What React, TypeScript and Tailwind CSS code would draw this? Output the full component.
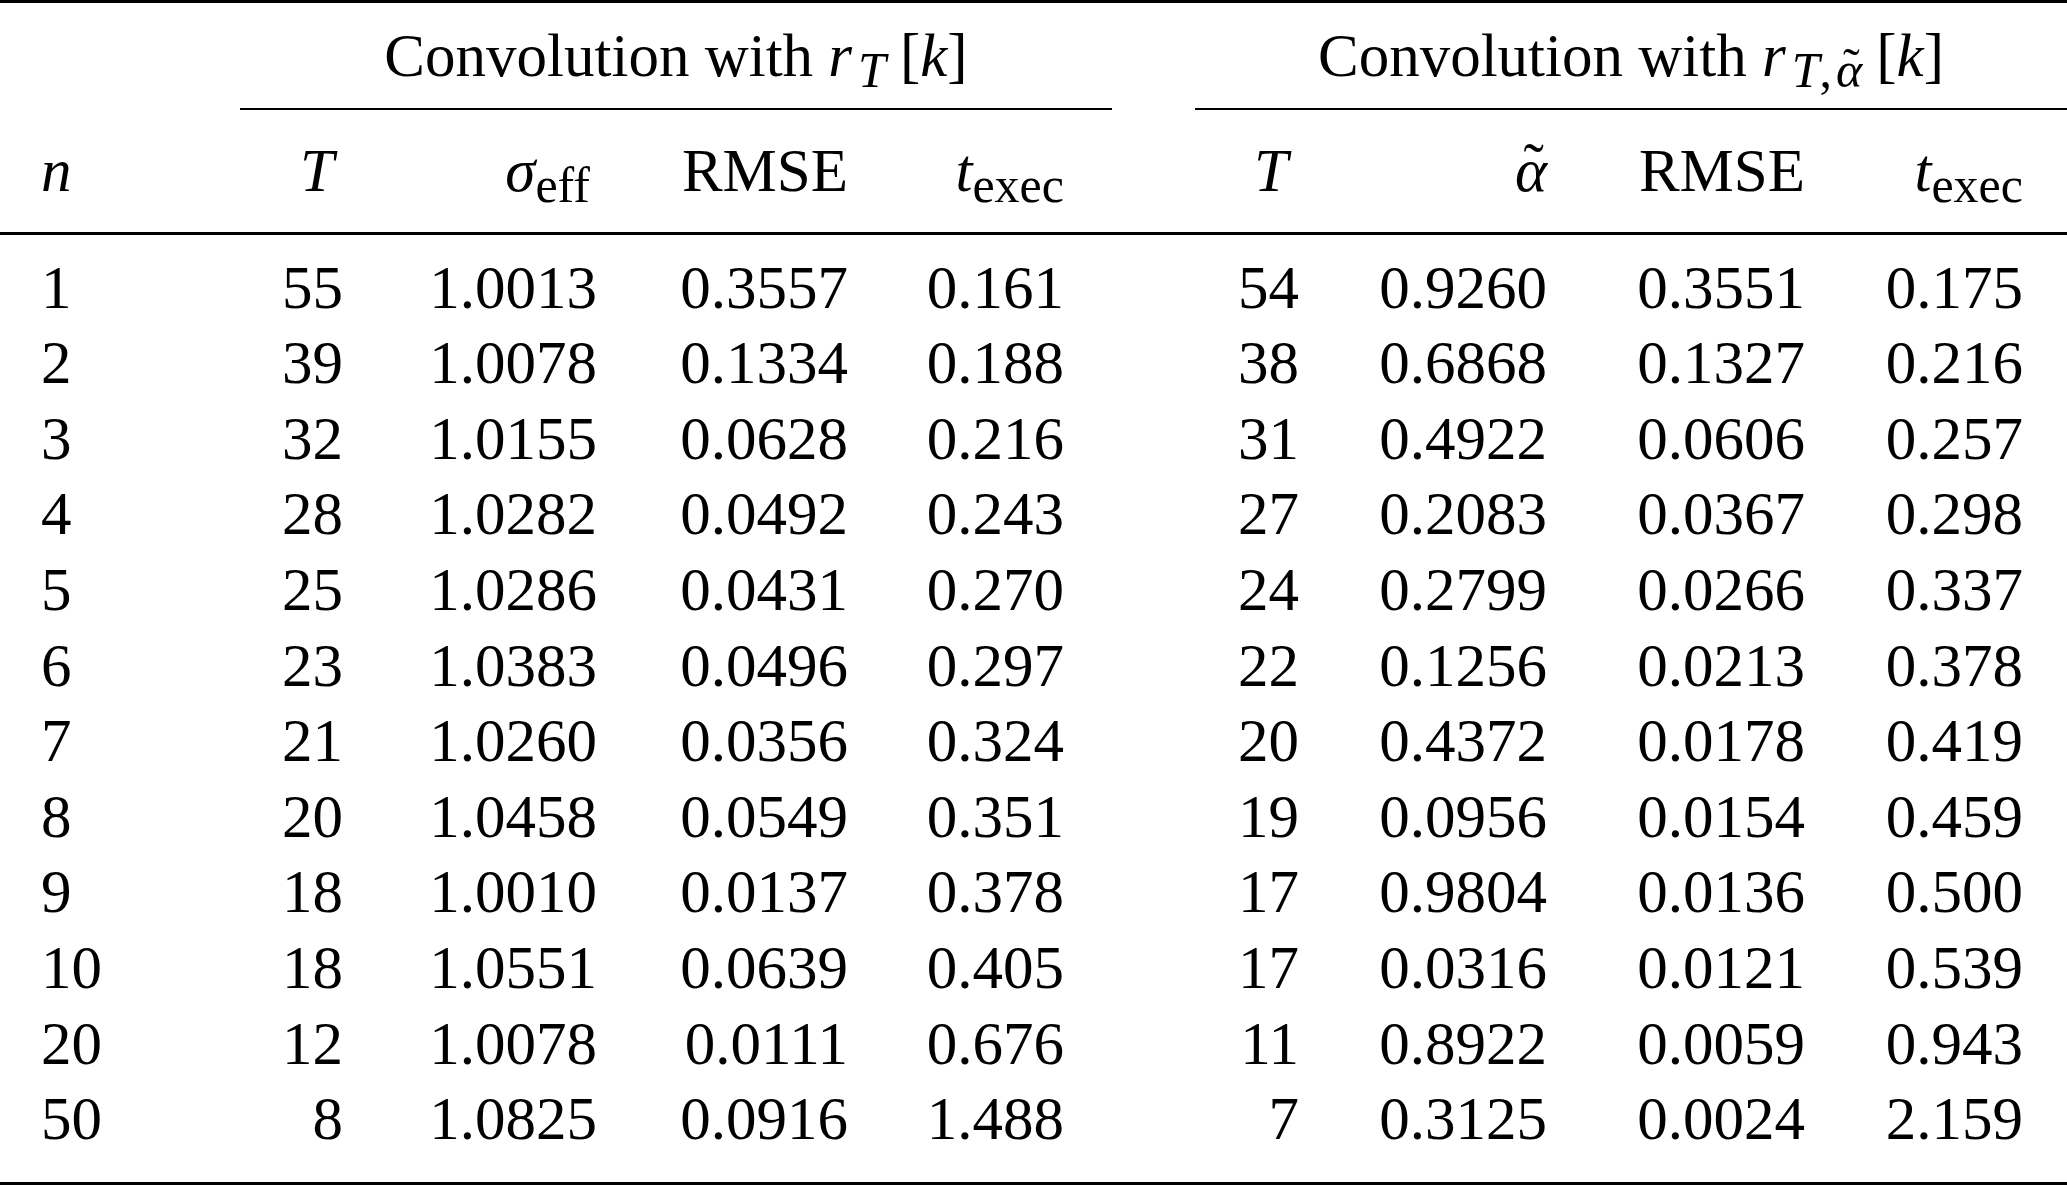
import React from "react";

const rows: string[][] = [
  ["1", "55", "1.0013", "0.3557", "0.161", "54", "0.9260", "0.3551", "0.175"],
  ["2", "39", "1.0078", "0.1334", "0.188", "38", "0.6868", "0.1327", "0.216"],
  ["3", "32", "1.0155", "0.0628", "0.216", "31", "0.4922", "0.0606", "0.257"],
  ["4", "28", "1.0282", "0.0492", "0.243", "27", "0.2083", "0.0367", "0.298"],
  ["5", "25", "1.0286", "0.0431", "0.270", "24", "0.2799", "0.0266", "0.337"],
  ["6", "23", "1.0383", "0.0496", "0.297", "22", "0.1256", "0.0213", "0.378"],
  ["7", "21", "1.0260", "0.0356", "0.324", "20", "0.4372", "0.0178", "0.419"],
  ["8", "20", "1.0458", "0.0549", "0.351", "19", "0.0956", "0.0154", "0.459"],
  ["9", "18", "1.0010", "0.0137", "0.378", "17", "0.9804", "0.0136", "0.500"],
  ["10", "18", "1.0551", "0.0639", "0.405", "17", "0.0316", "0.0121", "0.539"],
  ["20", "12", "1.0078", "0.0111", "0.676", "11", "0.8922", "0.0059", "0.943"],
  ["50", "8", "1.0825", "0.0916", "1.488", "7", "0.3125", "0.0024", "2.159"],
];

const GRID =
  "grid grid-cols-[200px_143px_254px_251px_216px_235px_248px_258px_218px_44px]";

function Sub({ children }: { children: React.ReactNode }) {
  return (
    <span className="relative top-[11px] text-[50px] leading-none">{children}</span>
  );
}

function AlphaTilde() {
  return (
    <span className="relative inline-block italic">
      α
      <span className="absolute not-italic left-[0.14em] top-[-0.08em]">˜</span>
    </span>
  );
}

export default function App() {
  return (
    <div className="w-[2067px] h-[1185px] bg-white text-black font-['Liberation_Serif',serif] text-[61px] leading-[75.6px] overflow-hidden">
      {/* top rule */}
      <div className="h-[3px] bg-black" />

      {/* spanning headers */}
      <div className="grid grid-cols-[240px_872px_83px_872px]">
        <div />
        <div className="pt-[14.6px] pb-[14.8px] border-b-2 border-black text-center whitespace-nowrap">
          Convolution with <span className="italic">r</span>
          <span className="ml-[6px]">
            <Sub>
              <span className="italic">T</span>
            </Sub>
          </span>
          <span className="ml-[14px]">[</span>
          <span className="italic">k</span>]
        </div>
        <div />
        <div className="pt-[14.6px] pb-[14.8px] border-b-2 border-black text-center whitespace-nowrap">
          Convolution with <span className="italic">r</span>
          <span className="ml-[6px]">
            <Sub>
              <span className="italic">T</span>,<span className="ml-[4px]" />
              <AlphaTilde />
            </Sub>
          </span>
          <span className="ml-[14px]">[</span>
          <span className="italic">k</span>]
        </div>
      </div>

      {/* column headers */}
      <div className={`${GRID} pt-[22.6px] pb-[23.8px] border-b-[3px] border-black whitespace-nowrap`}>
        <div className="pl-[41px] text-left italic">n</div>
        <div className="text-right italic pr-[9px]">T</div>
        <div className="text-right pr-[7px]">
          <span className="italic">σ</span>
          <Sub>eff</Sub>
        </div>
        <div className="text-right">RMSE</div>
        <div className="text-right">
          <span className="italic">t</span>
          <Sub>exec</Sub>
        </div>
        <div className="text-right italic pr-[11px]">T</div>
        <div className="text-right">
          <AlphaTilde />
        </div>
        <div className="text-right">RMSE</div>
        <div className="text-right">
          <span className="italic">t</span>
          <Sub>exec</Sub>
        </div>
        <div />
      </div>

      {/* body */}
      <div className="pt-[14.6px] pb-[25.2px] border-b-[3px] border-black">
        {rows.map((r, i) => (
          <div key={i} className={`${GRID} whitespace-nowrap`}>
            <div className="pl-[41px] text-left">{r[0]}</div>
            {r.slice(1).map((c, j) => (
              <div key={j} className="text-right">
                {c}
              </div>
            ))}
            <div />
          </div>
        ))}
      </div>
    </div>
  );
}
